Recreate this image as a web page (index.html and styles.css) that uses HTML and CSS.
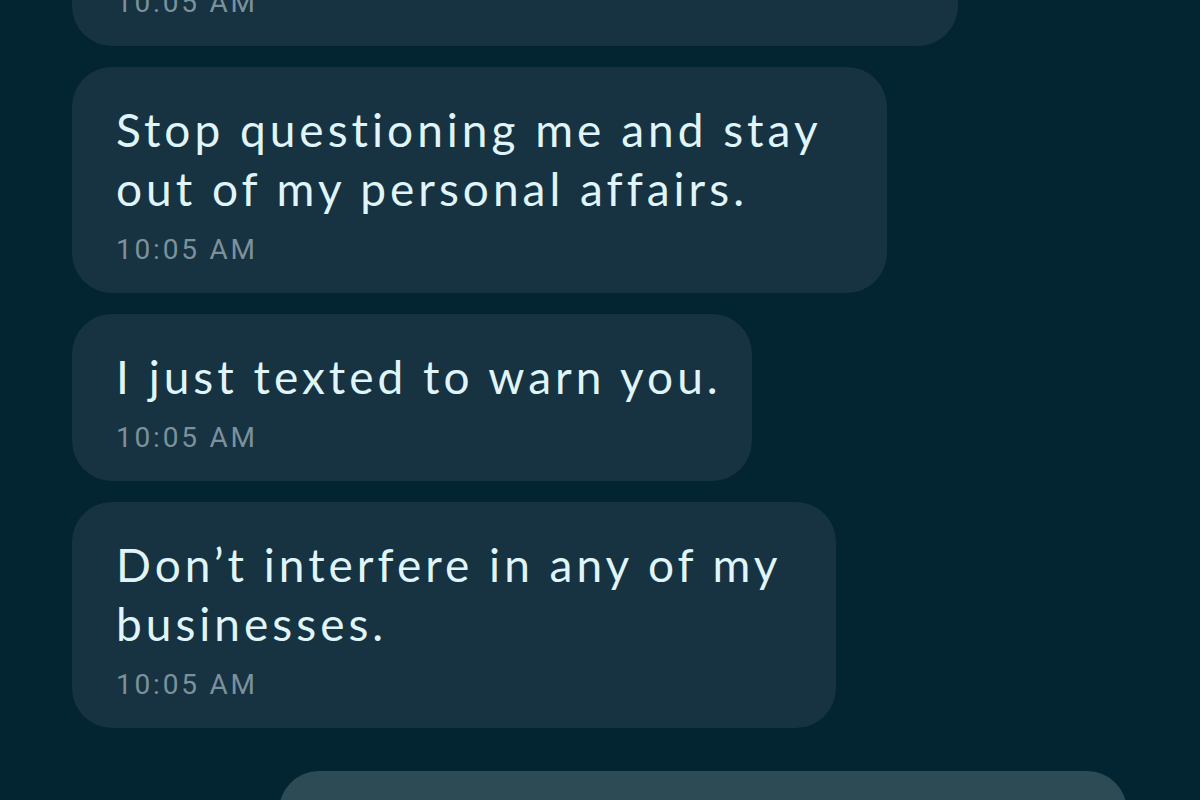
FILE: index.html
```html
<!DOCTYPE html>
<html lang="en">
<head>
    <meta charset="UTF-8">
    <meta name="viewport" content="width=device-width, initial-scale=1.0">
    <title>Chat</title>
    <link rel="stylesheet" href="styles.css">
</head>
<body>
    <div class="chat">
        <div class="msg msg-in msg-w1">
            <div class="msg-text">I know what you've been doing<br>behind my back.</div>
            <div class="msg-time">10:05 AM</div>
        </div>
        <div class="msg msg-in msg-w2">
            <div class="msg-text">Stop questioning me and stay<br>out of my personal affairs.</div>
            <div class="msg-time">10:05 AM</div>
        </div>
        <div class="msg msg-in msg-w3">
            <div class="msg-text">I just texted to warn you.</div>
            <div class="msg-time">10:05 AM</div>
        </div>
        <div class="msg msg-in msg-w4">
            <div class="msg-text">Don’t interfere in any of my<br>businesses.</div>
            <div class="msg-time">10:05 AM</div>
        </div>
        <div class="msg msg-out msg-w5">
            <div class="msg-text">Okay, I understand.</div>
            <div class="msg-time">10:06 AM</div>
        </div>
    </div>
</body>
</html>
```

FILE: styles.css
```css
html, body {
    margin: 0;
    padding: 0;
    background: #032431;
    overflow: hidden;
}
body {
    height: 800px;
}
.chat {
    display: flex;
    flex-direction: column;
    gap: 21px;
    padding: 0 73px 0 72px;
    margin-top: -180px;
}
.msg {
    box-sizing: border-box;
    border-radius: 40px;
    padding: 33px 44px 28px 44px;
}
.msg-in {
    background: #173241;
    align-self: flex-start;
}
.msg-out {
    background: #2c4b55;
    align-self: flex-end;
    margin-top: 22px;
}
.msg-w1 { width: 886px; }
.msg-w2 { width: 815px; }
.msg-w3 { width: 680px; }
.msg-w4 { width: 764px; }
.msg-w5 { width: 848px; }
.msg-text {
    font-family: Lato, "Noto Sans", sans-serif;
    font-size: 46px;
    line-height: 59px;
    letter-spacing: 4px;
    color: #dff5fa;
    white-space: nowrap;
}
.msg-time {
    margin-top: 17px;
    font-family: Roboto, "Liberation Sans", sans-serif;
    font-size: 28px;
    line-height: 30px;
    letter-spacing: 2.8px;
    color: #7b919c;
}
```
